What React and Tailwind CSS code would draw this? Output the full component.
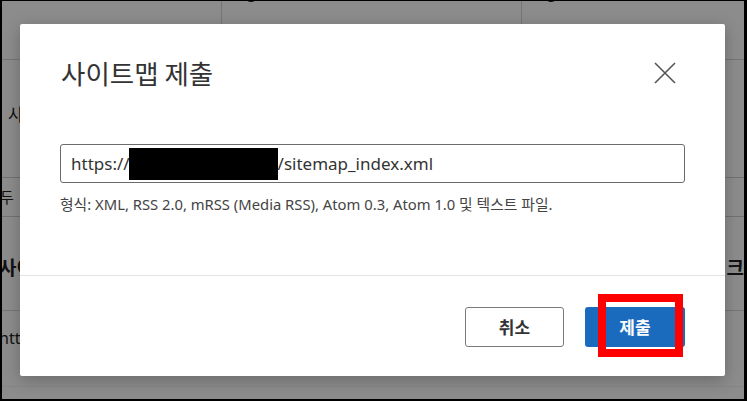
import React from "react";

const latin = { fontFamily: '"Segoe UI", "Noto Sans", "Noto Sans CJK KR", sans-serif' };

export default function App() {
  return (
    <div className="w-[747px] h-[401px] bg-black pt-[1px] pl-[2px] pr-[3px] pb-[2px]" style={latin}>
      <div className="relative w-full h-full bg-white overflow-hidden text-[#222]">
        {/* background page */}
        <div className="flex flex-col h-full">
          <div className="flex h-[59px] border-b border-[#d6d6d6] shrink-0">
            <div className="w-[220px] border-r border-[#d6d6d6]"></div>
            <div className="w-[300px] border-r border-[#d6d6d6] pl-[21px] -mt-[26px] text-[28px] leading-[32px]">0</div>
            <div className="flex-1 pl-[21px] -mt-[26px] text-[28px] leading-[32px]">0</div>
          </div>
          <div className="h-[117px] shrink-0 pl-[6px] pt-[42px] text-[17px]">사이트맵</div>
          <div className="flex h-[40px] shrink-0 border-y border-[#cfcfcf]">
            <div className="pl-0 text-[15px] leading-[38px] -ml-[2px]">두</div>
          </div>
          <div className="flex h-[94px] shrink-0 border-b border-[#d6d6d6] items-end justify-between pb-[28px]">
            <div className="text-[19px] font-bold -ml-[3px]">사이트맵</div>
            <div className="text-[19px] font-bold">크</div>
          </div>
          <div className="h-[75px] shrink-0 pt-[15px] text-[16px] -ml-[3px]">https://</div>
          <div className="border-t border-[#f2f2f2] flex-1"></div>
        </div>

        {/* overlay */}
        <div className="absolute inset-0 bg-black/45"></div>

        {/* dialog */}
        <div className="absolute left-[18px] top-[23px] w-[705px] h-[352px] bg-white rounded-[2px] shadow-[0_4px_16px_rgba(0,0,0,0.25)] flex flex-col">
          <div className="h-[251px] shrink-0 px-[40px] pt-[32px]">
            <div className="flex items-center justify-between">
              <div
                className="text-[26.5px] leading-[34px] text-[#333] pl-[1px]"
                style={{ fontFamily: '"Noto Sans CJK KR", sans-serif' }}
              >
                사이트맵 제출
              </div>
              <svg width="22" height="22" viewBox="0 0 22 22" className="mr-[9px]">
                <path d="M1 1 L21 21 M21 1 L1 21" stroke="#555" strokeWidth="1.6" fill="none" />
              </svg>
            </div>
            <div className="mt-[54px] h-[39px] border border-[#6b6b6b] rounded-[3px] flex items-center pl-[10px] text-[17px] text-[#333]">
              <span>https://</span>
              <span className="inline-block w-[149px] h-[32px] bg-black -ml-[1px]"></span>
              <span>/sitemap_index.xml</span>
            </div>
            <div className="mt-[11px] text-[14.8px] leading-[20px] text-[#444]">
              형식: XML, RSS 2.0, mRSS (Media RSS), Atom 0.3, Atom 1.0 및 텍스트 파일.
            </div>
          </div>
          <div className="border-t border-[#e3e3e3] flex-1 flex justify-end items-start pt-[31px] pr-[40px] gap-[21px]">
            <button
              className="w-[99px] h-[40px] border border-[#7a7a7a] rounded-[3px] bg-white text-[17px] font-bold text-[#333]"
              style={{ fontFamily: '"Noto Sans CJK KR", sans-serif' }}
            >
              취소
            </button>
            <div className="relative">
              <button
                className="w-[100px] h-[40px] rounded-[3px] bg-[#1a6bbd] text-[17px] font-bold text-white"
                style={{ fontFamily: '"Noto Sans CJK KR", sans-serif' }}
              >
                제출
              </button>
              <div className="absolute left-[13px] top-[-13px] w-[85px] h-[63px] border-[8px] border-[#ff0000]"></div>
            </div>
          </div>
        </div>
      </div>
    </div>
  );
}
